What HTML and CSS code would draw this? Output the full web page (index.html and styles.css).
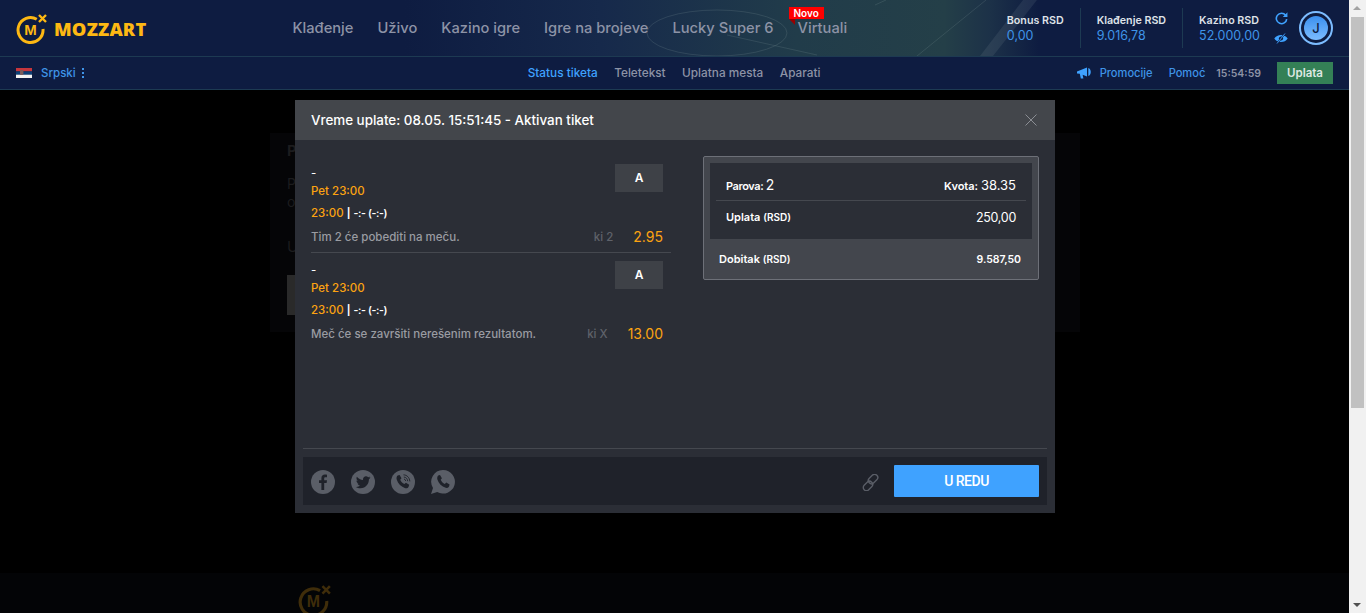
FILE: index.html
```html
<!DOCTYPE html>
<html lang="sr">
<head>
    <meta charset="UTF-8">
    <meta name="viewport" content="width=device-width, initial-scale=1.0">
    <title>Mozzart</title>
    <link rel="stylesheet" href="styles.css">
</head>
<body>
    <div class="page">
        <header class="topbar">
            <svg class="pitch" viewBox="0 0 800 56" preserveAspectRatio="none" aria-hidden="true">
                <g fill="none" stroke="#8fa5a8" stroke-opacity="0.18">
                    <ellipse cx="417" cy="33" rx="70" ry="23"/>
                    <path d="M427 35 L517 55"/>
                    <path d="M575 5 L586 0"/>
                    <path d="M686 0 L617 56"/>
                </g>
                <path d="M680 56 L693 56 L737 0 L723 0 Z" fill="#8fa5a8" fill-opacity="0.13"/>
            </svg>
            <a class="logo" href="#">
                <svg width="32" height="32" viewBox="0 0 32 32" aria-hidden="true">
                    <path d="M20.75 6.2 A12.5 12.5 0 1 0 27 16" fill="none" stroke="#fdb813" stroke-width="3"/>
                    <path d="M23 2 L30 9 M30 2 L23 9" stroke="#fdb813" stroke-width="2.4"/>
                    <text x="14.5" y="22" class="logo-m">M</text>
                </svg>
                <span class="logo-text">MOZZART</span>
            </a>
            <nav class="main-nav">
                <a href="#">Klađenje</a>
                <a href="#">Uživo</a>
                <a href="#">Kazino igre</a>
                <a href="#">Igre na brojeve</a>
                <a href="#">Lucky Super 6</a>
                <a class="has-badge" href="#">Virtuali<span class="badge">Novo</span></a>
            </nav>
            <div class="balances">
                <div class="balance">
                    <span class="balance-label">Bonus RSD</span>
                    <span class="balance-value">0,00</span>
                </div>
                <div class="balance">
                    <span class="balance-label">Klađenje RSD</span>
                    <span class="balance-value">9.016,78</span>
                </div>
                <div class="balance">
                    <span class="balance-label">Kazino RSD</span>
                    <span class="balance-value">52.000,00</span>
                </div>
            </div>
            <div class="balance-tools">
                <svg width="13" height="13" viewBox="0 0 12 12" aria-hidden="true">
                    <path d="M9.8 3 A4.8 4.8 0 1 0 10.8 6.5" fill="none" stroke="#3fa2ff" stroke-width="1.5"/>
                    <path d="M11.5 0.3 V4.6 H7.2 Z" fill="#3fa2ff"/>
                </svg>
                <svg width="14" height="11" viewBox="0 0 14 11" aria-hidden="true">
                    <path d="M0.3 5.5 C3 0.8 11 0.8 13.7 5.5 C11 10.2 3 10.2 0.3 5.5 Z" fill="#3fa2ff"/>
                    <circle cx="7" cy="5.5" r="2.1" fill="#0e1c41"/>
                    <path d="M3 10.5 L11 0.5" stroke="#0e1c41" stroke-width="1.6"/>
                    <path d="M3 10.5 L11 0.5" stroke="#3fa2ff" stroke-width="0.9"/>
                </svg>
            </div>
            <div class="avatar"><span>J</span></div>
        </header>

        <div class="subbar">
            <div class="lang">
                <svg class="flag" width="16" height="10" viewBox="0 0 16 10" aria-hidden="true">
                    <rect width="16" height="3.4" fill="#c6363c"/>
                    <rect y="3.4" width="16" height="3.3" fill="#0c4077"/>
                    <rect y="6.7" width="16" height="3.3" fill="#f4f4f4"/>
                    <rect x="4" y="2" width="3.4" height="5" rx="1" fill="#7a5a5a"/>
                </svg>
                <a href="#">Srpski</a>
                <span class="lang-dots"><i></i><i></i><i></i></span>
            </div>
            <nav class="sub-nav">
                <a class="active" href="#">Status tiketa</a>
                <a href="#">Teletekst</a>
                <a href="#">Uplatna mesta</a>
                <a href="#">Aparati</a>
            </nav>
            <div class="sub-right">
                <svg class="horn" width="15" height="12" viewBox="0 0 15 12" aria-hidden="true">
                    <path d="M0 4.5 L10 0.5 V9.5 L5.6 7.8 L6.4 11.5 H3.8 L2.8 6.7 L0 6.5 Z" fill="#3fa2ff"/>
                    <path d="M11.3 1 C14.6 2 14.6 8 11.3 9 Z" fill="#3fa2ff"/>
                </svg>
                <a class="promo" href="#">Promocije</a>
                <a class="help" href="#">Pomoć</a>
                <span class="clock">15:54:59</span>
                <a class="deposit" href="#">Uplata</a>
            </div>
        </div>

        <main class="content">
            <section class="ghost-panel">
                <h3>P</h3>
                <p>P<br>o</p>
                <p class="ghost-label">U</p>
                <div class="ghost-block"></div>
            </section>
        </main>

        <footer class="footer">
            <svg width="34" height="34" viewBox="0 0 32 32" aria-hidden="true">
                <path d="M20.75 6.2 A12.5 12.5 0 1 0 27 16" fill="none" stroke="#3f2d0a" stroke-width="3"/>
                <path d="M23 2 L30 9 M30 2 L23 9" stroke="#3f2d0a" stroke-width="2.4"/>
                <text x="14.5" y="22" class="logo-m dim">M</text>
            </svg>
        </footer>

        <div class="modal">
            <div class="modal-head">
                <span>Vreme uplate: 08.05. 15:51:45 - Aktivan tiket</span>
                <svg width="12" height="12" viewBox="0 0 12 12" aria-hidden="true">
                    <path d="M0.5 0.5 L11.5 11.5 M11.5 0.5 L0.5 11.5" stroke="#8b8e94" stroke-width="1"/>
                </svg>
            </div>
            <div class="modal-body">
                <div class="pairs">
                    <div class="pair">
                        <div class="pair-top">
                            <div>
                                <div class="pair-name">-</div>
                                <div class="pair-date">Pet 23:00</div>
                            </div>
                            <span class="pair-tag">A</span>
                        </div>
                        <div class="pair-score"><b>23:00</b> <i>|</i> <span>-:- (-:-)</span></div>
                        <div class="pair-tip">
                            <span class="tip-text">Tim 2 će pobediti na meču.</span>
                            <span class="tip-code">ki 2</span>
                            <span class="tip-odd">2.95</span>
                        </div>
                    </div>
                    <div class="pair">
                        <div class="pair-top">
                            <div>
                                <div class="pair-name">-</div>
                                <div class="pair-date">Pet 23:00</div>
                            </div>
                            <span class="pair-tag">A</span>
                        </div>
                        <div class="pair-score"><b>23:00</b> <i>|</i> <span>-:- (-:-)</span></div>
                        <div class="pair-tip">
                            <span class="tip-text">Meč će se završiti nerešenim rezultatom.</span>
                            <span class="tip-code">ki X</span>
                            <span class="tip-odd">13.00</span>
                        </div>
                    </div>
                </div>
                <div class="summary">
                    <div class="summary-inner">
                        <div class="summary-row first">
                            <span class="tight">Parova: <em class="count">2</em></span>
                            <span>Kvota: <em>38.35</em></span>
                        </div>
                        <div class="summary-row second">
                            <span>Uplata <small>(RSD)</small></span>
                            <em class="amount">250,00</em>
                        </div>
                    </div>
                    <div class="summary-win">
                        <span>Dobitak <small>(RSD)</small></span>
                        <span class="win-amount">9.587,50</span>
                    </div>
                </div>
            </div>
            <div class="modal-foot">
                <div class="share">
                    <svg width="24" height="24" viewBox="0 0 24 24" aria-hidden="true">
                        <circle cx="12" cy="12" r="12" fill="#5a5e67"/>
                        <path d="M13.2 20 V13 H15.6 L16 10.2 H13.2 V8.6 C13.2 7.8 13.5 7.3 14.6 7.3 H16 V4.8 C15.6 4.7 14.8 4.6 13.9 4.6 C11.8 4.6 10.4 5.9 10.4 8.2 V10.2 H8 V13 H10.4 V20 Z" fill="#1f222a"/>
                    </svg>
                    <svg width="24" height="24" viewBox="0 0 24 24" aria-hidden="true">
                        <circle cx="12" cy="12" r="12" fill="#5a5e67"/>
                        <path d="M19.5 7.6 C19 7.9 18.4 8 17.8 8.1 C18.4 7.7 18.9 7.1 19.1 6.4 C18.5 6.8 17.9 7 17.2 7.2 C16.6 6.6 15.8 6.2 15 6.2 C13.3 6.2 12 7.6 12 9.2 C12 9.4 12 9.7 12.1 9.9 C9.6 9.8 7.4 8.6 5.9 6.7 C5.1 8.1 5.5 9.9 6.8 10.8 C6.3 10.8 5.9 10.6 5.4 10.4 C5.4 11.9 6.5 13.2 7.9 13.5 C7.5 13.6 7 13.6 6.5 13.5 C6.9 14.7 8 15.6 9.3 15.6 C8 16.6 6.4 17.1 4.8 16.9 C6.2 17.8 7.7 18.3 9.4 18.3 C15 18.3 18.1 13.6 17.9 9.3 C18.5 8.8 19.1 8.3 19.5 7.6 Z" fill="#1f222a"/>
                    </svg>
                    <svg width="24" height="24" viewBox="0 0 24 24" aria-hidden="true">
                        <circle cx="12" cy="12" r="12" fill="#5a5e67"/>
                        <path d="M6.6 5.5 L8.6 5 L10.5 8.2 L9.2 9.7 C9.8 11.6 11.4 13.3 13.4 14 L14.9 12.7 L18.2 14.7 L17.6 16.7 C17 18 15.6 18.6 14.3 18.2 C10.2 17 7 13.8 5.7 9.6 C5.3 8 5.6 6.5 6.6 5.5 Z" fill="#1f222a"/>
                        <path d="M12.5 4.8 C16 5 18.6 7.6 18.8 11.4 M12.8 7 C15 7.2 16.5 8.8 16.7 11.2 M13 9 C14 9.2 14.6 10 14.7 11" fill="none" stroke="#1f222a" stroke-width="0.9"/>
                    </svg>
                    <svg width="24" height="24" viewBox="0 0 24 24" aria-hidden="true">
                        <path d="M12.2 0 A11.8 11.8 0 1 1 6.2 22 L0 24 L2 18 A11.8 11.8 0 0 1 12.2 0 Z" fill="#5a5e67"/>
                        <path d="M7.2 5.5 L9 5.1 L10.9 8.3 L9.7 9.8 C10.4 11.6 11.9 13.1 13.8 13.9 L15.3 12.6 L18.6 14.5 L18 16.4 C17.4 17.6 16 18.2 14.7 17.8 C10.7 16.7 7.6 13.7 6.4 9.6 C6 8.1 6.3 6.5 7.2 5.5 Z" fill="#1f222a"/>
                    </svg>
                </div>
                <svg class="link-icon" width="17" height="17" viewBox="0 0 16 16" aria-hidden="true">
                    <g fill="none" stroke="#5a5e67" stroke-width="1.3">
                        <rect x="7.4" y="-0.2" width="6" height="10" rx="3" transform="rotate(45 10.4 4.8)"/>
                        <rect x="2.6" y="6.2" width="6" height="10" rx="3" transform="rotate(45 5.6 11.2)"/>
                    </g>
                </svg>
                <a class="ok-btn" href="#">U REDU</a>
            </div>
        </div>
    </div>

    <div class="scrollbar">
        <span class="arrow-up"></span>
        <div class="thumb"></div>
        <div class="track"></div>
        <span class="arrow-down"></span>
    </div>
</body>
</html>
```

FILE: styles.css
```css
* {
    box-sizing: border-box;
}
html, body {
    margin: 0;
    height: 613px;
    overflow: hidden;
}
body {
    display: flex;
    background-color: #000;
    font-family: Inter, 'Liberation Sans', sans-serif;
    color: #fff;
}
a {
    color: inherit;
    text-decoration: none;
}
.page {
    flex: 1;
    min-width: 0;
    position: relative;
    display: flex;
    flex-direction: column;
}

/* top bar */
.topbar {
    position: relative;
    height: 57px;
    flex: none;
    display: flex;
    align-items: center;
    padding: 0 16px;
    background: linear-gradient(90deg, #0e1c41 0, #0e1c41 30%, #16294b 44.5%, #213c4a 59%, #243f48 70%, #1c3148 73.4%, #0e1c41 77%);
    border-bottom: 1px solid #1d3a52;
}
.pitch {
    position: absolute;
    left: 300px;
    top: 0;
    width: 800px;
    height: 56px;
}
.logo {
    position: relative;
    display: flex;
    align-items: center;
    gap: 6px;
    margin-top: 1px;
}
.logo-m {
    font-family: 'Liberation Sans', sans-serif;
    font-size: 15px;
    font-weight: 700;
    text-anchor: middle;
    fill: #fdb813;
}
.logo-m.dim {
    fill: #3f2d0a;
}
.logo-text {
    font-family: 'Open Sans', sans-serif;
    font-size: 18.3px;
    font-weight: 800;
    color: #fdb813;
    letter-spacing: 0.2px;
}
.main-nav {
    position: relative;
    display: flex;
    gap: 24px;
    margin-left: 146px;
    font-size: 14.7px;
    font-weight: 500;
    color: #8d93a6;
}
.has-badge {
    position: relative;
}
.badge {
    position: absolute;
    left: -9px;
    top: -12px;
    padding: 0 5px;
    height: 12px;
    line-height: 12px;
    background-color: #ff0000;
    color: #fff;
    font-size: 10px;
    font-weight: 600;
}
.badge::after {
    content: "";
    position: absolute;
    left: 0;
    top: 100%;
    border-top: 6px solid #9a0000;
    border-left: 6px solid transparent;
}
.balances {
    position: relative;
    display: flex;
    margin-left: auto;
}
.balance {
    display: flex;
    flex-direction: column;
    justify-content: center;
    height: 40px;
    padding: 0 16px;
    border-left: 1px solid #1d3a52;
}
.balance:first-child {
    border-left: none;
}
.balance:last-child {
    padding-right: 14px;
}
.balance-label {
    font-size: 10.7px;
    font-weight: 600;
    color: #dfe2e8;
    line-height: 15px;
}
.balance-value {
    font-size: 12.5px;
    color: #3f94e8;
    line-height: 15px;
}
.balance-tools {
    position: relative;
    display: flex;
    flex-direction: column;
    align-items: center;
    gap: 8px;
    width: 14px;
}
.avatar {
    position: relative;
    width: 34px;
    height: 34px;
    margin-left: 11px;
    padding: 3px;
    border: 2px solid #7cbcff;
    border-radius: 50%;
}
.avatar span {
    display: flex;
    align-items: center;
    justify-content: center;
    width: 100%;
    height: 100%;
    border-radius: 50%;
    background: linear-gradient(#3a8fee, #7cbcff);
    color: #0e1c41;
    font-size: 13px;
    font-weight: 500;
}

/* second bar */
.subbar {
    height: 33px;
    flex: none;
    display: flex;
    align-items: center;
    padding: 0 16px;
    background-color: #0e1c41;
    border-bottom: 1px solid #1d3a52;
    font-size: 11.5px;
    font-weight: 500;
    color: #8d93a6;
}
.lang {
    display: flex;
    align-items: center;
    gap: 9px;
    color: #3f94e8;
}
.lang-dots {
    display: flex;
    flex-direction: column;
    gap: 2px;
    margin-left: -3px;
}
.lang-dots i {
    width: 2px;
    height: 2px;
    background-color: #3f94e8;
}
.sub-nav {
    display: flex;
    gap: 16.5px;
    margin-left: 444px;
    font-size: 11.8px;
}
.sub-nav .active {
    color: #3fa2ff;
}
.sub-right {
    display: flex;
    align-items: center;
    margin-left: auto;
    color: #3f94e8;
}
.promo {
    margin-left: 8px;
    font-size: 11.1px;
}
.help {
    margin-left: 16px;
    font-size: 11.1px;
}
.clock {
    margin-left: 11px;
    font-size: 10.5px;
    font-weight: 600;
    color: #8d93a6;
}
.deposit {
    margin-left: 16px;
    width: 56px;
    height: 22px;
    line-height: 22px;
    text-align: center;
    background-color: #348056;
    color: #dfe8e3;
    font-weight: 600;
}

/* dimmed page behind the dialog */
.content {
    flex: 1;
    padding-top: 43px;
    padding-left: 270px;
}
.ghost-panel {
    width: 810px;
    height: 199px;
    padding: 9px 17px;
    background-color: #050507;
    color: #1c1c1e;
    font-size: 14px;
}
.ghost-panel h3 {
    margin: 0;
    font-size: 15px;
    line-height: 18px;
}
.ghost-panel p {
    margin: 15px 0 0;
    line-height: 18px;
}
.ghost-panel .ghost-label {
    margin-top: 27px;
    font-size: 15px;
}
.ghost-block {
    width: 50px;
    height: 40px;
    margin-top: 19px;
    background-color: #2a2a2a;
}
.footer {
    height: 40px;
    flex: none;
    padding: 11px 0 0 298px;
    background-color: #030406;
    overflow: hidden;
}

/* dialog */
.modal {
    position: absolute;
    left: 295px;
    top: 100px;
    width: 760px;
    height: 413px;
    display: flex;
    flex-direction: column;
    background-color: #2b2e36;
}
.modal-head {
    height: 40px;
    flex: none;
    display: flex;
    align-items: center;
    justify-content: space-between;
    padding: 0 18px 0 16px;
    background-color: #43464b;
    font-size: 13.4px;
    font-weight: 500;
}
.modal-body {
    flex: 1;
    display: flex;
    gap: 32px;
    margin: 0 8px;
    padding: 16px 8px 0;
    border-bottom: 1px solid #45484f;
}
.pairs {
    width: 360px;
}
.pair {
    height: 97px;
    padding: 9px 8px 0 0;
    border-bottom: 1px solid #45484f;
}
.pair:last-child {
    border-bottom: none;
}
.pair-top {
    display: flex;
    justify-content: space-between;
    height: 35px;
}
.pair-name {
    font-size: 11.5px;
    line-height: 16px;
}
.pair-date {
    margin-top: 2px;
    font-size: 11.5px;
    line-height: 16px;
    font-weight: 500;
    color: #fca311;
}
.pair-tag {
    width: 48px;
    height: 28px;
    margin-top: -1px;
    line-height: 28px;
    text-align: center;
    background-color: #3e4147;
    font-size: 12px;
    font-weight: 600;
}
.pair-score {
    margin-top: 5px;
    font-size: 11.5px;
    line-height: 16px;
    font-weight: 500;
}
.pair-score b {
    font-weight: 500;
    color: #fca311;
}
.pair-score i {
    font-style: normal;
    font-size: 10px;
    font-weight: 700;
}
.pair-score span {
    font-size: 10.5px;
    font-weight: 600;
    letter-spacing: -0.35px;
}
.pair-tip {
    display: flex;
    align-items: center;
    margin-top: 6px;
    height: 18px;
    font-size: 11.5px;
    font-weight: 500;
    color: #9a9ca2;
}
.tip-text {
    flex: 1;
}
.tip-code {
    color: #5f626a;
    margin-right: 20px;
}
.tip-odd {
    margin-bottom: 2px;
    font-size: 14px;
    font-weight: 400;
    color: #fca311;
}
.summary {
    width: 336px;
    height: 124px;
    padding: 6px;
    background-color: #43464d;
    border: 1px solid #6d7078;
    border-radius: 2px;
}
.summary-inner {
    height: 76px;
    padding: 0 6px;
    background-color: #2b2e36;
}
.summary-row {
    display: flex;
    justify-content: space-between;
    align-items: center;
    height: 38px;
    padding: 0 10px;
    font-size: 11px;
    font-weight: 600;
}
.summary-row.first {
    padding-top: 6px;
    border-bottom: 1px solid #45484f;
}
.summary-row.second {
    padding-bottom: 6px;
}
.tight {
    letter-spacing: -0.4px;
}
.summary em {
    font-style: normal;
    font-weight: 400;
    font-size: 13px;
}
.summary em.count {
    font-size: 14px;
}
.summary em.amount {
    font-size: 12.5px;
    letter-spacing: -0.3px;
}
.summary small {
    font-size: 10px;
}
.summary-win {
    display: flex;
    justify-content: space-between;
    align-items: center;
    height: 40px;
    padding: 0 11px 0 9px;
    font-size: 11px;
    font-weight: 600;
}
.win-amount {
    font-size: 10.5px;
}
.modal-foot {
    flex: none;
    display: flex;
    align-items: center;
    height: 48px;
    margin: 8px;
    padding: 0 8px;
    background-color: #1f222a;
}
.share {
    display: flex;
    gap: 16px;
    margin-top: 2px;
}
.link-icon {
    margin-left: auto;
    margin-right: 15px;
    margin-top: 2px;
}
.ok-btn {
    width: 145px;
    height: 32px;
    line-height: 32px;
    text-align: center;
    background-color: #3fa2ff;
    border-radius: 1px;
    font-family: 'Roboto', sans-serif;
    font-size: 14px;
    font-weight: 500;
    letter-spacing: -0.5px;
}

/* window scrollbar */
.scrollbar {
    width: 17px;
    flex: none;
    display: flex;
    flex-direction: column;
    background-color: #f1f1f1;
    position: relative;
}
.thumb {
    height: 391px;
    margin: 17px 2px 0;
    background-color: #c1c1c1;
}
.track {
    flex: 1;
}
.arrow-up, .arrow-down {
    position: absolute;
    left: 4px;
    width: 0;
    height: 0;
    border-left: 4px solid transparent;
    border-right: 4px solid transparent;
}
.arrow-up {
    top: 6px;
    border-bottom: 4px solid #a3a3a3;
}
.arrow-down {
    bottom: 6px;
    border-top: 4px solid #505050;
}
```
